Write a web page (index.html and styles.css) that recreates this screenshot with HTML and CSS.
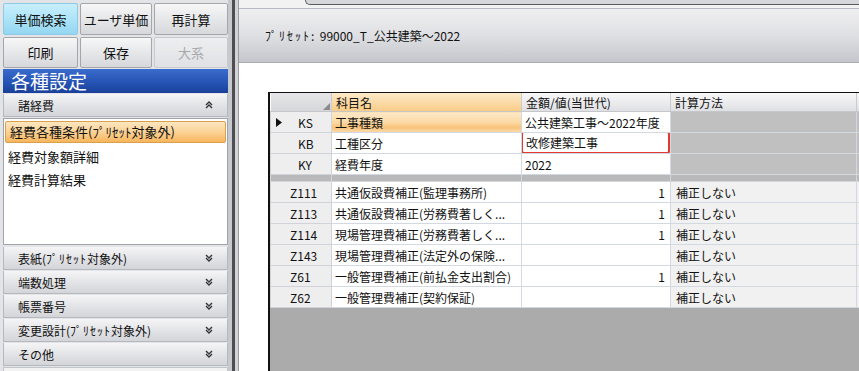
FILE: index.html
```html
<!DOCTYPE html>
<html lang="ja">
<head>
<meta charset="UTF-8">
<title>諸経費 各種設定</title>
<link rel="stylesheet" href="styles.css">
</head>
<body>
<!-- Left: command buttons and settings menu -->
<div class="sidebar">
  <div class="btn-grid">
    <div class="btn active">単価検索</div>
    <div class="btn">ユーザ単価</div>
    <div class="btn">再計算</div>
    <div class="btn">印刷</div>
    <div class="btn">保存</div>
    <div class="btn disabled">大系</div>
  </div>
  <div class="side-title">各種設定</div>
  <div class="sec-head"><span>諸経費</span>
    <svg class="chev" width="8" height="8" viewBox="0 0 8 8"><polyline points="1,4 4,1 7,4" /><polyline points="1,7 4,4 7,7" /></svg>
  </div>
  <div class="sec-list">
    <div class="sec-item selected">経費各種条件(<span class="hw">ﾌﾟﾘｾｯﾄ</span>対象外)</div>
    <div class="sec-item">経費対象額詳細</div>
    <div class="sec-item">経費計算結果</div>
  </div>
  <div class="sec-head"><span>表紙(<span class="hw">ﾌﾟﾘｾｯﾄ</span>対象外)</span>
    <svg class="chev" width="8" height="8" viewBox="0 0 8 8"><polyline points="1,1 4,4 7,1" /><polyline points="1,4 4,7 7,4" /></svg>
  </div>
  <div class="sec-head"><span>端数処理</span>
    <svg class="chev" width="8" height="8" viewBox="0 0 8 8"><polyline points="1,1 4,4 7,1" /><polyline points="1,4 4,7 7,4" /></svg>
  </div>
  <div class="sec-head"><span>帳票番号</span>
    <svg class="chev" width="8" height="8" viewBox="0 0 8 8"><polyline points="1,1 4,4 7,1" /><polyline points="1,4 4,7 7,4" /></svg>
  </div>
  <div class="sec-head"><span>変更設計(<span class="hw">ﾌﾟﾘｾｯﾄ</span>対象外)</span>
    <svg class="chev" width="8" height="8" viewBox="0 0 8 8"><polyline points="1,1 4,4 7,1" /><polyline points="1,4 4,7 7,4" /></svg>
  </div>
  <div class="sec-head"><span>その他</span>
    <svg class="chev" width="8" height="8" viewBox="0 0 8 8"><polyline points="1,1 4,4 7,1" /><polyline points="1,4 4,7 7,4" /></svg>
  </div>
  <div class="side-fill"></div>
</div>

<div class="splitter"></div>

<!-- Right: preset header and the expense grid -->
<div class="main">
  <div class="tab-strip">
    <div class="tab"></div>
    <div class="tab-rest"></div>
  </div>
  <div class="preset-bar"><span><span class="hw wide">ﾌﾟﾘｾｯﾄ</span>:&nbsp;&nbsp;99000_T_公共建築～2022</span></div>
  <div class="grid-wrap">
    <table class="grid">
      <colgroup>
        <col class="c-head"><col class="c-name"><col class="c-val"><col class="c-calc"><col class="c-extra">
      </colgroup>
      <tr class="hdr">
        <th class="corner"><svg width="7" height="7" viewBox="0 0 7 7"><polygon points="7,0 7,7 0,7" fill="#8a8a8a" /></svg></th>
        <th class="hot">科目名</th>
        <th>金額/値(当世代)</th>
        <th>計算方法</th>
        <th></th>
      </tr>
      <tr>
        <td class="rh rh-k"><svg class="mark" width="6" height="9" viewBox="0 0 6 9"><polygon points="0,0 6,4.5 0,9" fill="#111" /></svg>KS</td>
        <td class="cur">工事種類</td>
        <td>公共建築工事～2022年度</td>
        <td class="off"></td>
        <td class="off"></td>
      </tr>
      <tr>
        <td class="rh rh-k">KB</td>
        <td>工種区分</td>
        <td class="edit"><span class="edit-box">改修建築工事</span></td>
        <td class="off"></td>
        <td class="off"></td>
      </tr>
      <tr>
        <td class="rh rh-k">KY</td>
        <td>経費年度</td>
        <td>2022</td>
        <td class="off"></td>
        <td class="off"></td>
      </tr>
      <tr class="sep">
        <td></td><td></td><td></td><td></td><td></td>
      </tr>
      <tr>
        <td class="rh">Z111</td>
        <td>共通仮設費補正(監理事務所)</td>
        <td class="num">1</td>
        <td class="calc">補正しない</td>
        <td class="calc"></td>
      </tr>
      <tr>
        <td class="rh">Z113</td>
        <td>共通仮設費補正(労務費著しく...</td>
        <td class="num">1</td>
        <td class="calc">補正しない</td>
        <td class="calc"></td>
      </tr>
      <tr>
        <td class="rh">Z114</td>
        <td>現場管理費補正(労務費著しく...</td>
        <td class="num">1</td>
        <td class="calc">補正しない</td>
        <td class="calc"></td>
      </tr>
      <tr>
        <td class="rh">Z143</td>
        <td>現場管理費補正(法定外の保険...</td>
        <td class="num"></td>
        <td class="calc">補正しない</td>
        <td class="calc"></td>
      </tr>
      <tr>
        <td class="rh">Z61</td>
        <td>一般管理費補正(前払金支出割合)</td>
        <td class="num">1</td>
        <td class="calc">補正しない</td>
        <td class="calc"></td>
      </tr>
      <tr>
        <td class="rh">Z62</td>
        <td>一般管理費補正(契約保証)</td>
        <td class="num"></td>
        <td class="calc">補正しない</td>
        <td class="calc"></td>
      </tr>
    </table>
  </div>
</div>
</body>
</html>
```

FILE: styles.css
```css
/* Page frame */
body {
  margin: 0;
  width: 859px;
  height: 371px;
  overflow: hidden;
  display: flex;
  background-color: #dcdee2;
  font-family: "Noto Sans CJK JP", "DejaVu Sans", sans-serif;
  font-size: 12px;
  color: #111;
}
/* half-width katakana runs a little wider in the original */
.hw {
  letter-spacing: 1px;
}
.hw.wide {
  letter-spacing: 2px;
}

/* Sidebar */
.sidebar {
  width: 225px;
  padding-left: 3px;
  display: flex;
  flex-direction: column;
  background-color: #e2e4e7;
}
.btn-grid {
  display: grid;
  grid-template-columns: 75px 72px 1fr;
  grid-template-rows: 32px 31px;
  gap: 2px 2px;
  padding-top: 3px;
}
.btn {
  display: flex;
  justify-content: center;
  align-items: center;
  font-size: 13px;
  border: 1px solid #a4a6aa;
  border-radius: 2px;
  background: linear-gradient(#f7f7f7, #e6e7e9 50%, #d6d8db);
}
.btn.active {
  border-color: #8ec8e4;
  background: linear-gradient(#c8eefc, #ade4f8 50%, #94d6f1);
}
.btn.disabled {
  color: #a8a8a8;
  border-color: #c8cacd;
  background: linear-gradient(#eceef0, #dfe1e4);
}
.side-title {
  margin-top: 1px;
  height: 24px;
  line-height: 24px;
  padding-left: 8px;
  font-size: 19px;
  color: #fff;
  background: linear-gradient(#3a6ccd, #2452b2 60%, #1a409a);
}
.sec-head {
  height: 22px;
  margin-top: 1px;
  padding: 0 14px;
  display: flex;
  align-items: center;
  justify-content: space-between;
  border: 1px solid #b4b8bf;
  border-width: 0 1px 1px 1px;
  background: linear-gradient(#f5f5f6, #e3e4e7 50%, #d3d5d9);
}
.sidebar .sec-head:first-of-type {
  margin-top: 0;
}
.chev polyline {
  fill: none;
  stroke: #333;
  stroke-width: 1.4;
}
.sec-list {
  height: 121px;
  margin: 1px 0;
  padding: 2px 0;
  background-color: #fff;
  border: 1px solid #a0a4aa;
}
.sec-item {
  height: 23px;
  line-height: 23px;
  padding-left: 4px;
  font-size: 13px;
}
.sec-item .hw {
  letter-spacing: 0;
}
.sec-item.selected {
  height: 20px;
  line-height: 20px;
  margin: 0 1px 2px 1px;
  border: 1px solid #d9a04e;
  border-radius: 2px;
  background: linear-gradient(#fde6c0, #fbd091 55%, #f7b55c);
}
.side-fill {
  flex: 1;
  margin-top: 1px;
  background-color: #f2f2f3;
  border: 1px solid #c2c5ca;
  border-bottom: none;
}

/* Splitter between panes */
.splitter {
  width: 3px;
  background-color: #4e4e50;
  border-left: 4px solid #c6c9ce;
  border-right: 3px solid #d2d3d6;
}

/* Main pane */
.main {
  flex: 1;
  display: flex;
  flex-direction: column;
  overflow: hidden;
  background-color: #fff;
  border-left: 1px solid #9a9ca0;
}
.tab-strip {
  height: 8px;
  display: flex;
  background-color: #f2f2f2;
}
.tab {
  width: 66px;
}
.tab-rest {
  flex: 1;
  height: 4px;
  background-color: #d6d7da;
  border-bottom: 1px solid #5a5a5c;
  border-left: 1px solid #5a5a5c;
  border-bottom-left-radius: 6px;
}
.preset-bar {
  height: 53px;
  display: flex;
  align-items: center;
  padding-left: 26px;
  white-space: pre;
  border-top: 1px solid #b6bac2;
  border-bottom: 1px solid #a9acb3;
  background: linear-gradient(#efeff0, #dfe0e3 50%, #c3c6cc);
}

/* Grid */
.grid-wrap {
  flex: 1;
  margin: 29px 0 0 29px;
  background-color: #ababab;
  border-left: 2px solid #111;
  border-top: 1px solid #111;
  overflow: hidden;
}
.grid {
  border-collapse: collapse;
  table-layout: fixed;
  width: 646px;
  background-color: #fff;
}
.c-head { width: 61px; }
.c-name { width: 190px; }
.c-val { width: 149px; }
.c-calc { width: 186px; }
.c-extra { width: 60px; }
.grid th {
  height: 17px;
  padding: 0 0 0 4px;
  font-weight: normal;
  text-align: left;
  white-space: nowrap;
  border-right: 1px solid #c9cbcf;
  border-bottom: 1px solid #c4c6ca;
  background: linear-gradient(#f8f8f9, #ececee 50%, #dfe0e3);
}
.grid th.hot {
  background: linear-gradient(#fde9c9, #fbdba9 50%, #f9cc86);
}
.grid th.corner {
  text-align: right;
  vertical-align: bottom;
  padding: 0 1px 1px 0;
  background: linear-gradient(#e6e6e8, #d6d7da);
  line-height: 0;
}
.grid td {
  height: 20px;
  padding: 0 0 0 3px;
  white-space: nowrap;
  overflow: hidden;
  border: 1px solid #d3d9e2;
}
.grid td.rh {
  padding-left: 19px;
  background-color: #eeeeef;
  border-color: #d0d3d8;
}
.grid td.rh-k {
  padding-left: 27px;
  position: relative;
}
.mark {
  position: absolute;
  left: 5px;
  top: 6px;
}
.grid td.cur {
  background: linear-gradient(#fde8c8, #fcd9a4 50%, #f9c27a 75%, #fcdcad);
}
.grid td.off {
  background-color: #c0c0c0;
  border-color: #d3d9e2;
}
.grid td.calc {
  padding-left: 5px;
  background-color: #f1f1f1;
}
.grid td.num {
  text-align: right;
  padding-right: 5px;
}
.grid td.edit {
  position: relative;
}
.edit-box {
  position: absolute;
  left: -1px;
  top: -2px;
  right: 0;
  bottom: -1px;
  padding-left: 3px;
  line-height: 20px;
  border: 2px solid #e23a30;
  border-radius: 3px;
}
.grid tr.sep td {
  height: 6px;
  padding: 0;
  background-color: #b9b9b9;
  border-color: #d3d6db;
}
```
